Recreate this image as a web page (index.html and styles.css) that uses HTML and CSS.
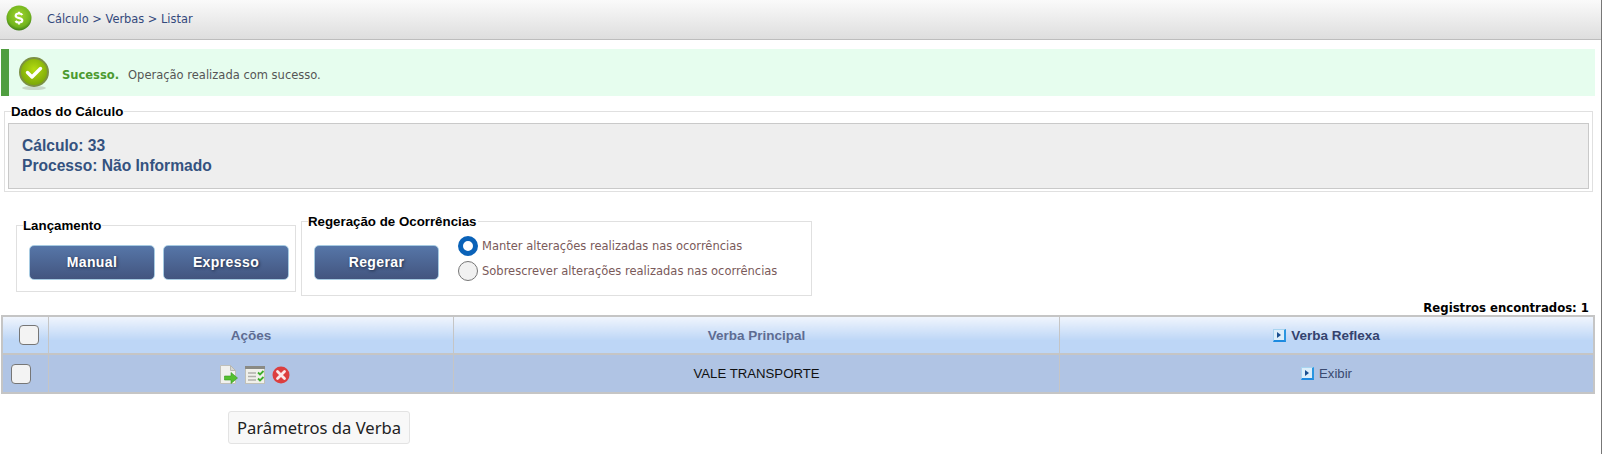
FILE: index.html
```html
<!DOCTYPE html>
<html>
<head>
    <title>Verbas - Listar</title>
    <link rel="stylesheet" href="styles.css">
</head>
<body>
    <div class="page">
        <div class="topo">
            <svg class="topo-icone" width="28" height="28" viewBox="0 0 28 28">
                <defs>
                    <radialGradient id="gradTopo" cx="50%" cy="40%" r="60%">
                        <stop offset="0" stop-color="#a2d62c"/>
                        <stop offset=".75" stop-color="#72b41e"/>
                        <stop offset="1" stop-color="#3f7d18"/>
                    </radialGradient>
                </defs>
                <circle cx="14" cy="14" r="12.500" fill="url(#gradTopo)"/>
                <path d="M17.300 11c-.6-1-1.800-1.500-3.300-1.500-2 0-3.300 1-3.300 2.300 0 3.200 6.600 1.400 6.600 4.500 0 1.300-1.300 2.200-3.300 2.200-1.500 0-2.800-.5-3.500-1.500M14 7.800v2M14 18.500v2" fill="none" stroke="#fff" stroke-width="2.200"/>
            </svg>
            <span class="migalha">Cálculo &gt; Verbas &gt; Listar</span>
        </div>

        <div class="sucesso">
            <svg class="sucesso-icone" width="32" height="34" viewBox="0 0 32 34">
                <defs>
                    <radialGradient id="gradOk" cx="50%" cy="40%" r="60%">
                        <stop offset="0" stop-color="#b4dc10"/>
                        <stop offset="1" stop-color="#7ba808"/>
                    </radialGradient>
                </defs>
                <ellipse cx="16" cy="31" rx="12" ry="2" fill="#c9d8c9"/>
                <circle cx="16" cy="15" r="15" fill="#7c9044"/>
                <circle cx="16" cy="15" r="13" fill="url(#gradOk)"/>
                <path d="M9.500 15.500l4.500 4.500 8.500-8.500" fill="none" stroke="#fff" stroke-width="3.400" stroke-linecap="round" stroke-linejoin="round"/>
            </svg>
            <strong class="sucesso-titulo">Sucesso.</strong>
            <span class="sucesso-texto">Operação realizada com sucesso.</span>
        </div>

        <fieldset class="grupo dados">
            <legend>Dados do Cálculo</legend>
            <div class="dados-caixa">
                Cálculo: 33<br>
                Processo: Não Informado
            </div>
        </fieldset>

        <div class="acoes-linha">
            <fieldset class="grupo lancamento">
                <legend>Lançamento</legend>
                <div class="botoes">
                    <button class="botao">Manual</button>
                    <button class="botao">Expresso</button>
                </div>
            </fieldset>
            <fieldset class="grupo regeracao">
                <legend>Regeração de Ocorrências</legend>
                <div class="botoes">
                    <button class="botao">Regerar</button>
                    <div class="opcoes">
                        <label class="opcao"><span class="radio marcado"></span>Manter alterações realizadas nas ocorrências</label>
                        <label class="opcao"><span class="radio"></span>Sobrescrever alterações realizadas nas ocorrências</label>
                    </div>
                </div>
            </fieldset>
        </div>

        <div class="registros">Registros encontrados: 1</div>

        <table class="lista">
            <thead>
                <tr>
                    <th class="col-check"><span class="check"></span></th>
                    <th class="col-acoes">Ações</th>
                    <th class="col-verba">Verba Principal</th>
                    <th class="col-reflexa"><span class="seta"></span>Verba Reflexa</th>
                </tr>
            </thead>
            <tbody>
                <tr>
                    <td class="cel-check"><span class="check"></span></td>
                    <td>
                        <div class="icones">
                            <svg width="19" height="19" viewBox="0 0 19 19">
                                <path d="M1.500 .5h10l5 5v13h-15z" fill="#f1f1ee" stroke="#c0c0ba"/>
                                <path d="M11.500 .5v5h5z" fill="#d8d8d2" stroke="#b8b8b2"/>
                                <path d="M5.500 11h6.500v-3.500l6.500 5.500-6.500 5.500v-3.500h-6.500z" fill="#55c030" stroke="#36981f" stroke-width=".6"/>
                            </svg>
                            <svg width="20" height="18" viewBox="0 0 20 18">
                                <rect x=".5" y=".5" width="19" height="17" fill="#f0f0ea" stroke="#c0c0b8"/>
                                <rect x="0" y="0" width="20" height="3" fill="#8a8a84"/>
                                <path d="M3 7h8M3 10.500h8M3 14h8" stroke="#b0b0aa" stroke-width="1.400"/>
                                <path d="M13 6.500l2 2 3.500-3.500M13 12.500l2 2 3.500-3.500" fill="none" stroke="#3fae2c" stroke-width="1.800"/>
                            </svg>
                            <svg width="18" height="18" viewBox="0 0 18 18">
                                <circle cx="9" cy="9" r="8.500" fill="#dc3f3f"/>
                                <path d="M5.500 5.500l7 7M12.500 5.500l-7 7" stroke="#fbeaea" stroke-width="2.800" stroke-linecap="round"/>
                            </svg>
                        </div>
                    </td>
                    <td class="cel-verba">VALE TRANSPORTE</td>
                    <td class="cel-exibir"><span class="seta"></span>Exibir</td>
                </tr>
            </tbody>
        </table>

        <div class="dica">Parâmetros da Verba</div>
    </div>
</body>
</html>
```

FILE: styles.css
```css
html, body {
    margin: 0;
    padding: 0;
}
body {
    font-family: "DejaVu Sans", sans-serif;
    background-color: white;
}
.page {
    position: relative;
    width: 1602px;
    height: 454px;
    overflow: hidden;
    box-sizing: border-box;
    border-right: 1px solid #777;
}
.topo {
    display: flex;
    align-items: center;
    height: 39px;
    padding-left: 5px;
    background: linear-gradient(#fafafa, #dedede);
    border-bottom: 1px solid #bdbdbd;
}
.topo-icone {
    margin-top: -4px;
}
.migalha {
    margin-left: 14px;
    margin-top: -1px;
    font-size: 11.400px;
    color: #34497c;
}
.sucesso {
    display: flex;
    align-items: center;
    width: 1594px;
    height: 47px;
    margin: 9px 0 0 1px;
    padding-left: 9px;
    box-sizing: border-box;
    border-left: 8px solid #4f9e3f;
    background-color: #e6fdee;
    font-size: 11.500px;
}
.sucesso-icone {
    margin-top: 3px;
}
.sucesso-titulo {
    margin: 4px 0 0 12px;
    color: #4c9a30;
}
.sucesso-texto {
    margin: 4px 0 0 9px;
    color: #555;
}
.grupo {
    margin: 0;
    padding: 0;
    border: 1px solid #e0e0e0;
    min-width: 0;
}
.grupo legend {
    padding: 0 1px 0 0;
    margin-left: 6px;
    font-family: "Liberation Sans", sans-serif;
    font-size: 13.300px;
    font-weight: bold;
    line-height: 15px;
    color: black;
}
.dados {
    margin: 8px 0 0 4px;
    width: 1589px;
    box-sizing: border-box;
    height: 88px;
}
.dados-caixa {
    height: 66px;
    margin: 4px 3px 3px;
    box-sizing: border-box;
    padding: 12px 13px 0;
    background-color: #eeeeee;
    border: 1px solid #c9c9c9;
    font-family: "Liberation Sans", sans-serif;
    font-size: 15.600px;
    line-height: 20px;
    font-weight: bold;
    color: #34527f;
}
.acoes-linha {
    display: flex;
    align-items: flex-start;
    gap: 5px;
    margin: 22px 0 0 16px;
}
.lancamento {
    width: 280px;
    height: 74px;
    margin-top: 4px;
    box-sizing: border-box;
}
.regeracao {
    width: 511px;
    height: 82px;
    box-sizing: border-box;
}
.botoes {
    display: flex;
    align-items: flex-start;
    gap: 8px;
    padding-left: 12px;
}
.lancamento .botoes {
    padding-top: 12px;
}
.regeracao .botoes {
    padding-top: 16px;
}
.botao {
    width: 126px;
    height: 35px;
    padding: 0 0 2px;
    border: 1px solid #a7cbe2;
    border-radius: 5px;
    background: linear-gradient(#5676a8, #43557f);
    color: white;
    font-family: "Liberation Sans", sans-serif;
    font-size: 14px;
    font-weight: bold;
    letter-spacing: .4px;
    text-shadow: 1px 1px 3px #1d2a45;
}
.regeracao .botao {
    width: 125px;
    flex: none;
}
.opcoes {
    display: flex;
    flex-direction: column;
    gap: 5px;
    margin: -9px 0 0 11px;
}
.opcao {
    display: flex;
    align-items: center;
    height: 20px;
    font-size: 11.500px;
    color: #7a5a5a;
    white-space: nowrap;
}
.radio {
    width: 20px;
    height: 20px;
    margin-right: 4px;
    box-sizing: border-box;
    border: 1px solid #767676;
    border-radius: 50%;
    background-color: #f1f1f1;
    flex: none;
}
.radio.marcado {
    border: 5px solid #0a62b8;
    background-color: white;
}
.registros {
    margin: 6px 12px 0 0;
    height: 13px;
    line-height: 13px;
    text-align: right;
    font-size: 11.700px;
    font-weight: bold;
    color: black;
}
.lista {
    width: 1594px;
    margin: 0 0 0 1px;
    border-collapse: collapse;
    table-layout: fixed;
    font-family: "Liberation Sans", sans-serif;
    font-size: 13.200px;
    border: 2px solid #c5c5c5;
}
.lista th, .lista td {
    padding: 0;
    text-align: center;
    border-left: 1px solid #c5c5c5;
    border-right: 1px solid #c5c5c5;
}
.lista th {
    height: 36px;
    font-size: 13.500px;
    background: linear-gradient(#f0f5fd, #bdd6f6 65%);
    color: #5e6c92;
    border-bottom: 2px solid #c5c5c5;
}
.lista td {
    height: 37px;
    background-color: #b0c4e4;
    color: #111;
}
.col-check {
    width: 45px;
}
.col-acoes {
    width: 404px;
}
.col-verba {
    width: 605px;
}
.lista .col-reflexa {
    color: #34436e;
}
.lista .cel-exibir {
    color: #3a4a70;
}
.check {
    display: block;
    width: 20px;
    height: 20px;
    box-sizing: border-box;
    border: 1px solid #767676;
    border-radius: 4px;
    background-color: #f3f3f3;
}
.col-check .check {
    margin-left: 16px;
}
.cel-check .check {
    margin-left: 8px;
}
.icones {
    display: flex;
    justify-content: center;
    align-items: center;
    gap: 7px;
    padding: 2px 0 0 6px;
}
.seta {
    display: inline-block;
    position: relative;
    width: 13px;
    height: 13px;
    margin-right: 5px;
    vertical-align: -2px;
    box-sizing: border-box;
    border: 1px solid #a8d4f0;
    border-right: 2px solid #2a96e0;
    border-bottom: 2px solid #1d8ae0;
    background-color: #dceefa;
}
.seta::after {
    content: "";
    position: absolute;
    left: 3px;
    top: 2px;
    border-left: 4px solid #1a4f90;
    border-top: 3px solid transparent;
    border-bottom: 3px solid transparent;
}
.dica {
    position: absolute;
    left: 228px;
    top: 411px;
    width: 182px;
    height: 33px;
    box-sizing: border-box;
    border: 1px solid #e3e3e3;
    border-radius: 3px;
    background-color: #f8f8f8;
    font-family: "Noto Sans", sans-serif;
    font-size: 16.600px;
    line-height: 31px;
    text-align: center;
    color: #222;
}
```
